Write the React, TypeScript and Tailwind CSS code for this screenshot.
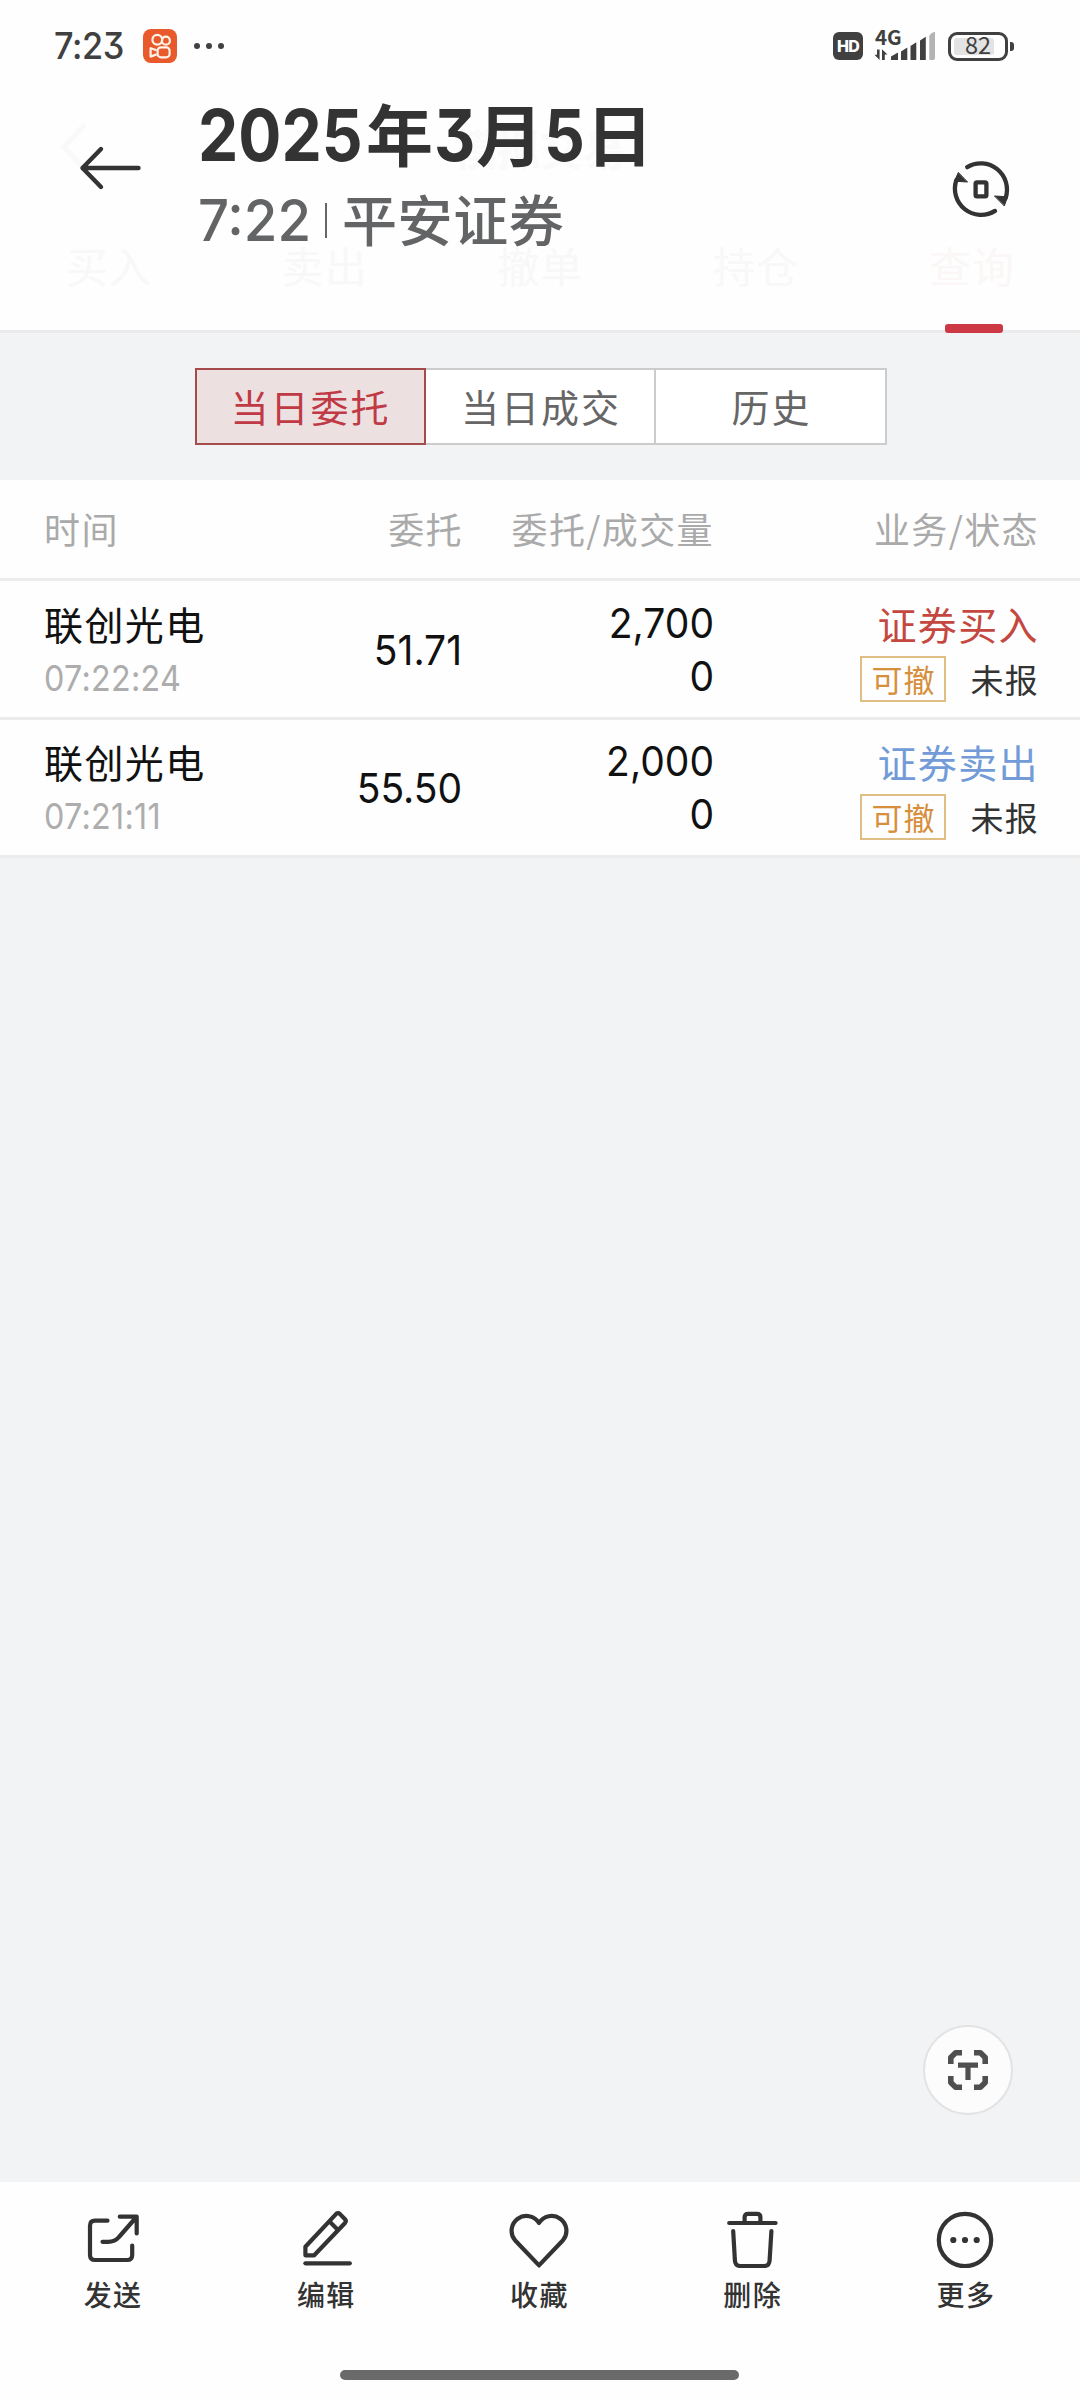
import React from "react";

const CJK = "font-['Noto_Sans_CJK_SC',sans-serif]";
const NUM = "font-['Inter','Noto_Sans_CJK_SC',sans-serif] [font-feature-settings:'cv09']";

type Order = {
  name: string;
  time: string;
  price: string;
  amount: string;
  filled: string;
  side: "buy" | "sell";
  sideLabel: string;
};

const orders: Order[] = [
  { name: "联创光电", time: "07:22:24", price: "51.71", amount: "2,700", filled: "0", side: "buy", sideLabel: "证券买入" },
  { name: "联创光电", time: "07:21:11", price: "55.50", amount: "2,000", filled: "0", side: "sell", sideLabel: "证券卖出" },
];

function StatusBar() {
  return (
    <div className="flex h-[92px] items-center pl-[54px] pr-[66px]">
      <span className={`${NUM} w-[89px] origin-left scale-x-[.94] whitespace-nowrap text-[36.5px] font-medium leading-[40px] tracking-[-0.4px] text-[#404040]`}>
        7:23
      </span>
      <svg className="h-[34px] w-[34px]" viewBox="0 0 34 34" fill="none" stroke="#fff3e8" strokeWidth="2.2">
        <rect width="34" height="34" rx="8" fill="#e8592b" stroke="none" />
        <circle cx="14.3" cy="10.8" r="4.9" />
        <circle cx="22.9" cy="11.7" r="4" />
        <rect x="14.6" y="18.3" width="12" height="10" rx="3.4" />
        <path d="M13.6 21.3 L7.6 19.2 V27.6 L13.6 25.4" strokeLinejoin="round" />
      </svg>
      <div className="ml-[17px] flex gap-[6px]">
        <i className="size-[6px] rounded-full bg-[#404040]" />
        <i className="size-[6px] rounded-full bg-[#404040]" />
        <i className="size-[6px] rounded-full bg-[#404040]" />
      </div>
      <div className="ml-auto flex h-[32px] items-center">
        <span className="flex h-[28px] w-[30px] items-center justify-center rounded-[6px] bg-[#404040] font-['Inter',sans-serif] text-[16px] font-extrabold leading-none tracking-[-0.8px] text-white">
          HD
        </span>
        <div className="relative ml-[11px] h-[32px] w-[62px]">
          <span className={`${CJK} absolute left-[1px] top-[-4px] text-[20.5px] font-bold leading-[20px] text-[#404040]`}>4G</span>
          <svg className="h-[32px] w-[62px]" viewBox="0 0 62 32" fill="#404040">
            <path d="M5.6 19.5 V30 L0.5 24.8 H3 V19.5z M8 30 V19.2 L13.5 24.6 H10.8 V30z" />
            <path d="M17 30 V26.5 L24 22.5 V30z M27 30 V21.5 L33.3 17.5 V30z M36.5 30 V16 L42.3 12.3 V30z M46 30 V10.5 L51.8 6.8 V30z" />
            <path d="M55.3 30 V5.5 Q57.5 2.5 61 1.7 V28 Q61 30 59 30z" fill="#b3b3b3" />
          </svg>
        </div>
        <div className="ml-[12px] flex h-[29px] w-[60px] rounded-[9px] border-[3px] border-[#404040] p-[3px]">
          <div className="relative h-full w-[40px] rounded-[3px] bg-[#e3e3e3]">
            <span className={`${CJK} absolute left-[11px] top-[-3.5px] text-[23.5px] leading-[20px] text-[#404040]`}>82</span>
          </div>
        </div>
        <i className="ml-[2px] h-[9px] w-[4px] rounded-r-[3px] bg-[#404040]" />
      </div>
    </div>
  );
}

function TradeTabsBackdrop() {
  return (
    <div className={`${CJK} absolute inset-0 flex flex-col border-b-[3px] border-[#ebebed] bg-[#fefefe]`}>
      <div className="mt-[115px] flex h-[64px] items-center">
        <svg className="ml-[58px] h-[50px] w-[32px]" viewBox="0 0 32 50" fill="none" stroke="#f9f9f9" strokeWidth="5">
          <path d="M27 2 L6 25 L27 48" />
        </svg>
        <span className="ml-[364px] text-[43px] font-bold leading-[60px] text-[#fafafa]">模拟交易</span>
      </div>
      <div className="mt-[54px] grid grid-cols-5 pl-[1px] text-center text-[42px] leading-[64px] tracking-[1px] text-[#f8f8f8]">
        <span>买入</span>
        <span>卖出</span>
        <span>撤单</span>
        <span>持仓</span>
        <span className="text-[#fbf7f6]">查询</span>
      </div>
      <div className="mt-auto -mb-[3px] ml-[945px] h-[9px] w-[58px] rounded-[3px] bg-[#cc3843]" />
    </div>
  );
}

function PhotoHeader() {
  const digits = `${NUM} inline-block origin-left scale-x-[.895] text-[71.5px] leading-none tracking-[0px]`;
  return (
    <header className="relative h-[333px] shrink-0">
      <TradeTabsBackdrop />
      <div className="relative">
        <StatusBar />
        <div className="flex">
          <svg className="ml-[76px] mt-[52px] h-[48px] w-[68px]" viewBox="0 0 68 48" fill="none" stroke="#333" strokeWidth="4.4" strokeLinecap="round" strokeLinejoin="round">
            <path d="M62.5 24 H6.5 M25 5 L6.5 24 L25 43" />
          </svg>
          <div className={`${CJK} ml-[54px] whitespace-nowrap`}>
            <h1 className="text-[67px] font-bold leading-[80px] tracking-[1px] text-[#333]">
              <span className={`${digits} w-[168px]`}>2025</span>年<span className={`${digits} w-[42px]`}>3</span>月
              <span className={`${digits} w-[42px]`}>5</span>日
            </h1>
            <div className="mt-[13px] flex h-[64px] items-center text-[55px] font-medium leading-[64px] text-[#636465]">
              <span className={`${NUM} w-[127px] origin-left translate-y-[3px] scale-x-[.94] text-[58px]`}>7:22</span>
              <i className="mt-[7px] h-[35px] w-[2px] bg-[#666]" />
              <span className="ml-[15px] tracking-[0.6px]">平安证券</span>
            </div>
          </div>
          <svg className="ml-auto mr-[69px] mt-[67px] h-[60px] w-[60px]" viewBox="951 159 60 60" fill="none" stroke="#333" strokeWidth="4.3" strokeLinecap="round">
            <path d="M967.2 167.2 A26.2 26.2 0 0 1 1005.6 198" />
            <path d="M995 210.9 A26.2 26.2 0 0 1 956.4 180" />
            <path d="M994.8 196 L1007.6 196.8 L1004.4 205.6z M967.2 182 L954.4 181.2 L958.2 172.8z" fill="#333" strokeWidth="1" strokeLinejoin="round" />
            <rect x="975.6" y="182.3" width="10.8" height="14" rx="1.4" />
          </svg>
        </div>
      </div>
    </header>
  );
}

function Segments() {
  return (
    <div className={`${CJK} flex h-[147px] shrink-0 pl-[195px] pt-[35px]`}>
      <div className="flex h-[77px] w-[692px] bg-white text-center text-[38px] leading-[72px] tracking-[2px] text-[#666]">
        <div className="w-[231px] border-2 border-[#a64b4b] bg-[#ede0e1] text-[#c03a45]">当日委托</div>
        <div className="w-[230px] border-y-2 border-r-2 border-[#ccc] pl-[2px]">当日成交</div>
        <div className="w-[231px] border-y-2 border-r-2 border-[#ccc] pl-[2px]">历史</div>
      </div>
    </div>
  );
}

const cols = "grid grid-cols-[220px_199px_251px_1fr] pl-[44px] pr-[41px]";

function OrderRow({ o }: { o: Order }) {
  return (
    <div className={`${cols} ${CJK} h-[139px] border-b-[3px] border-[#ebebec] text-[#111] last:h-[138px] last:*:-mt-px`}>
      <div className="pt-[17px]">
        <div className="text-[39px] leading-[50px] tracking-[1.4px]">{o.name}</div>
        <div className={`${NUM} mt-[11px] origin-left scale-x-[.91] text-[35.5px] leading-[40px] tracking-[0.3px] text-[#adadad]`}>{o.time}</div>
      </div>
      <div className={`${NUM} origin-right scale-x-[.94] pr-[1px] pt-[49px] text-right text-[41.5px] leading-[40px]`}>{o.price}</div>
      <div className={`${NUM} origin-right scale-x-[.94] pt-[22px] text-right text-[41.5px] leading-[40px]`}>
        <div>{o.amount}</div>
        <div className="mt-[13px]">{o.filled}</div>
      </div>
      <div className="flex flex-col items-end pt-[17px]">
        <div className={`text-[39px] leading-[50px] tracking-[1.4px] ${o.side === "buy" ? "text-[#c44840]" : "text-[#729bd8]"}`}>
          {o.sideLabel}
        </div>
        <div className="mt-[8px] flex h-[46px] items-center">
          <span className="h-[46px] w-[86px] border-2 border-[#dfbd83] text-center text-[31px] leading-[42px] tracking-[0.8px] text-[#d68f3c]">可撤</span>
          <span className="ml-[24px] text-[33px] leading-[40px] tracking-[1.3px] text-[#333]">未报</span>
        </div>
      </div>
    </div>
  );
}

function OrderTable() {
  return (
    <section className="shrink-0 bg-[#fefefe]">
      <div className={`${cols} ${CJK} h-[101px] whitespace-nowrap border-b-[3px] border-[#ececec] text-[36px] leading-[96px] tracking-[1.4px] text-[#aaa]`}>
        <span>时间</span>
        <span className="text-right">委托</span>
        <span className="text-right">委托/成交量</span>
        <span className="text-right">业务/状态</span>
      </div>
      {orders.map((o) => (
        <OrderRow key={o.time} o={o} />
      ))}
    </section>
  );
}

function TextScanButton() {
  return (
    <button className="absolute left-[923px] top-[2025px] flex size-[90px] items-center justify-center rounded-full border-2 border-[#e2e3e5] bg-[#fcfcfc]">
      <svg className="size-[40px]" viewBox="0 0 40 40" fill="none" stroke="#4f4f4f" strokeWidth="5.6">
        <path d="M2.8 14 V7.6 L7.6 2.8 H14 M26 2.8 H32.4 L37.2 7.6 V14 M37.2 26 V32.4 L32.4 37.2 H26 M14 37.2 H7.6 L2.8 32.4 V26" strokeLinejoin="round" />
        <path d="M10 15.2 H30 M20 15 V30" strokeWidth="5.2" />
      </svg>
    </button>
  );
}

const actions: { label: string; art: React.ReactNode }[] = [
  {
    label: "发送",
    art: (
      <>
        <path d="M24.5 12.7 H12 Q7 12.7 7 17.7 V47 Q7 52 12 52 H44.2 Q49.2 52 49.2 47 V37.5" />
        <path d="M36.8 8.7 H53.7 V25.5 M19.5 33.8 H25 Q32 33.8 36 29 L53 9.5" />
      </>
    ),
  },
  {
    label: "编辑",
    art: (
      <>
        <path d="M9.4 47.3 V38.7 L40.2 5.9 Q42 4.3 43.8 5.9 L49 11.2 Q50.6 13 49 15 L18.2 47.3z" />
        <path d="M34 14 L41.5 21.6" />
        <path d="M9.4 55.3 H53.8" />
      </>
    ),
  },
  {
    label: "收藏",
    art: <path d="M30 15 A14.8 14.8 0 1 0 6 32.2 L30 57.4 L54 32.2 A14.8 14.8 0 1 0 30 15z" />,
  },
  {
    label: "删除",
    art: (
      <>
        <path d="M7.2 15 H53.6 M22.6 14 V9.2 Q22.6 5.8 26 5.8 H35 Q38.4 5.8 38.4 9.2 V14" />
        <path d="M11.2 23.2 L12.9 52.5 Q13.2 58 18.5 58 H42 Q47.3 58 47.6 52.5 L49.4 23.2" />
      </>
    ),
  },
  {
    label: "更多",
    art: (
      <>
        <circle cx="30" cy="32" r="26.2" />
        <g fill="#333" stroke="none">
          <circle cx="18.3" cy="32" r="3.1" />
          <circle cx="30" cy="32" r="3.1" />
          <circle cx="41.7" cy="32" r="3.1" />
        </g>
      </>
    ),
  },
];

function BottomBar() {
  return (
    <footer className="mt-auto flex h-[218px] flex-col bg-[#fefefe]">
      <nav className="grid grid-cols-5 pl-[6px] pr-[8px] pt-[26px]">
        {actions.map((a) => (
          <div key={a.label} className="flex flex-col items-center">
            <svg className="size-[60px]" viewBox="0 0 60 60" fill="none" stroke="#333" strokeWidth="4.2" strokeLinecap="round" strokeLinejoin="round">
              {a.art}
            </svg>
            <span className={`${CJK} mt-[6px] pl-[1px] text-[28px] font-medium leading-[40px] tracking-[1.4px] text-[#333]`}>{a.label}</span>
          </div>
        ))}
      </nav>
      <div className="mb-[20px] ml-[340px] mt-auto h-[10px] w-[399px] rounded-full bg-[#6a6a6a]" />
    </footer>
  );
}

export default function App() {
  return (
    <div className="relative flex h-[2400px] w-[1080px] flex-col overflow-hidden bg-[#f2f3f5]">
      <PhotoHeader />
      <Segments />
      <OrderTable />
      <BottomBar />
      <TextScanButton />
    </div>
  );
}
